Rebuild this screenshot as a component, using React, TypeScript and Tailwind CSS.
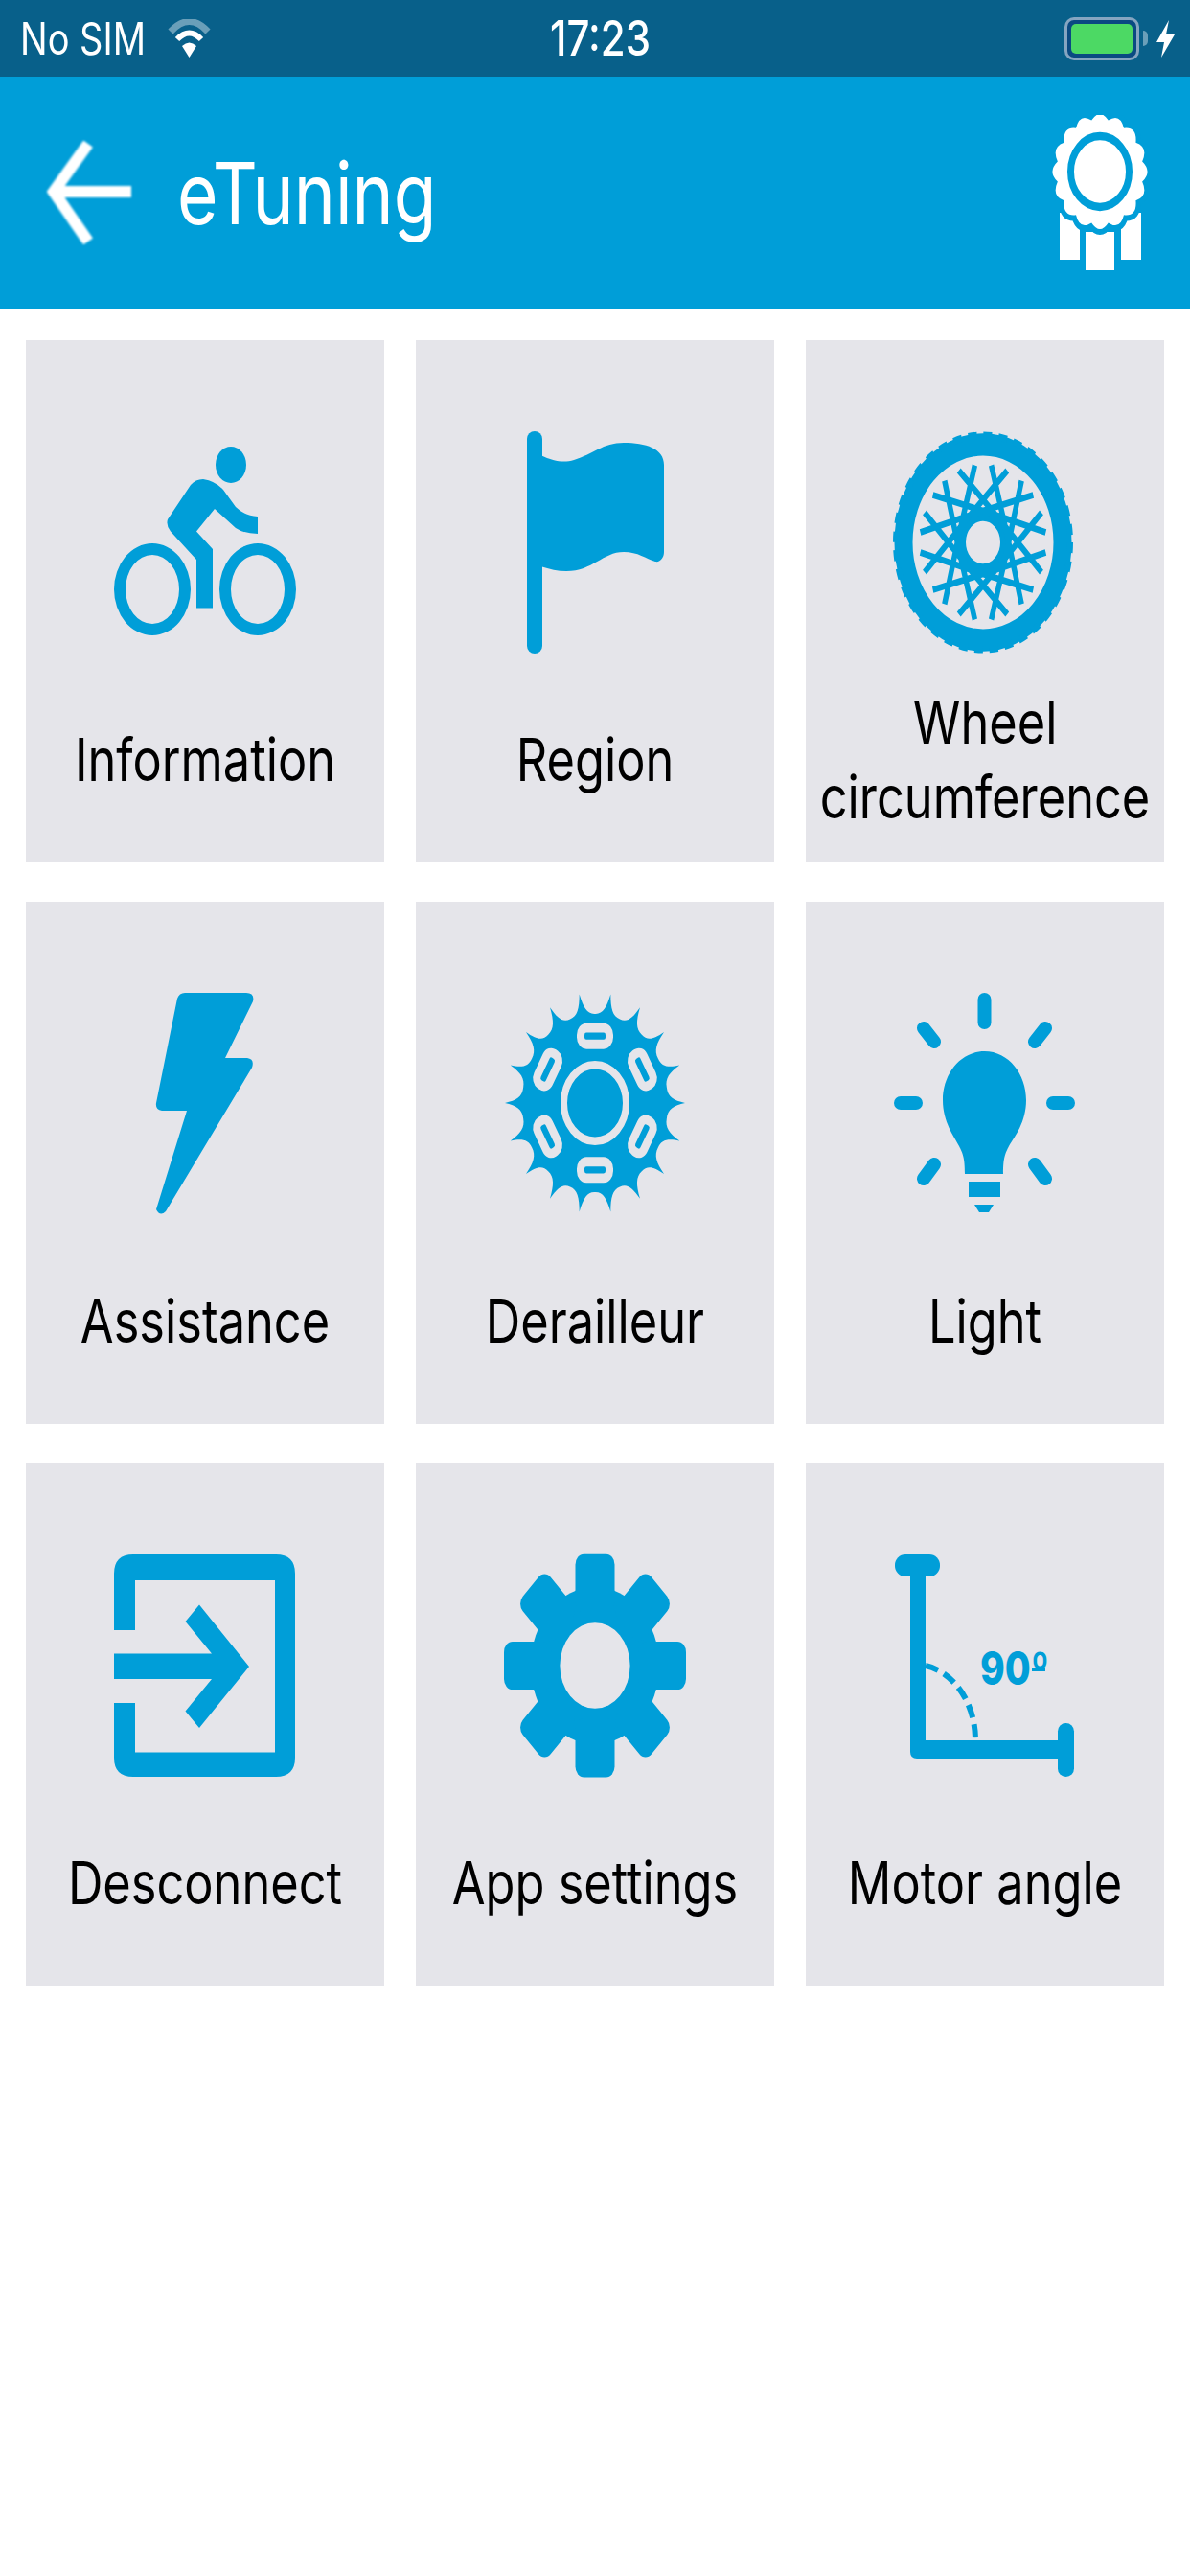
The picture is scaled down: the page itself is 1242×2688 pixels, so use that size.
import type { ReactNode } from 'react';

const BLUE = '#009ed8';
const CARD = '#e5e5ea';

const polar = (r: number, deg: number) => {
  const a = (deg * Math.PI) / 180;
  return `${(r * Math.cos(a)).toFixed(2)} ${(r * Math.sin(a)).toFixed(2)}`;
};

// scalloped edge for the award badge
const lobes = (count: number, rTip: number, rCtrl: number, start = 0) => {
  const step = 360 / count;
  let d = `M${polar(rTip, start)}`;
  for (let i = 0; i < count; i++) {
    const a = start + i * step;
    d += ` Q${polar(rCtrl, a + step / 2)} ${polar(rTip, a + step)}`;
  }
  return d + 'Z';
};

// sprocket edge: thin tips with round valleys between them
const teeth = (count: number, rTip: number, rValley: number) => {
  const step = 360 / count;
  let d = `M${polar(rTip, 0)}`;
  for (let i = 0; i < count; i++) {
    const a = i * step;
    d += ` C${polar(rValley + 6, a + 1.5)} ${polar(rValley, a + 4)} ${polar(rValley, a + step / 2)}`;
    d += ` C${polar(rValley, a + step - 4)} ${polar(rValley + 6, a + step - 1.5)} ${polar(rTip, a + step)}`;
  }
  return d + 'Z';
};

// every icon is drawn on a card-wide canvas, 232px tall; the source art is stretched vertically
function IconCanvas({ children }: { children: ReactNode }) {
  return (
    <svg viewBox="0 0 374 232" className="block w-[374px] h-[232px] overflow-visible" fill={BLUE}>
      {children}
    </svg>
  );
}

function BikeIcon() {
  return (
    <IconCanvas>
      <ellipse cx="214" cy="35" rx="16" ry="19" />
      <path
        fillRule="evenodd"
        d="M92 165a40 48 0 1 0 80 0a40 48 0 1 0 -80 0ZM104 165a28 36 0 1 1 56 0a28 36 0 1 1 -56 0ZM202 165a40 48 0 1 0 80 0a40 48 0 1 0 -80 0ZM214 165a28 36 0 1 1 56 0a28 36 0 1 1 -56 0Z"
      />
      <path d="M185 50Q198 52 206 61L219 79Q228 88 242 89V107Q228 107 219 101L197 81L178 104.5L195 123V184.5H178V134L151 104.5Q146 98 148 92L172 56Q177 50 185 50Z" />
    </IconCanvas>
  );
}

function FlagIcon() {
  return (
    <IconCanvas>
      <rect x="116" y="0" width="16" height="232" rx="8" />
      <path d="M130 25C145 32 155 33 165 30C185 24 195 12 217 12C240 12 259 18 259 35V126C259 132 255 137 250 136C240 133 232 126 217 126C195 126 185 146 157 146C148 146 140 144 130 141Z" />
    </IconCanvas>
  );
}

function WheelIcon() {
  const spokes = Array.from({ length: 24 }, (_, i) => {
    const end = 7.5 + i * 15;
    const hub = end + (i % 2 === 0 ? 72 : -72);
    return `M${polar(66, end)}L${polar(26, hub)}`;
  });
  return (
    <IconCanvas>
      <g transform="translate(185 116) scale(1 1.23)">
        <circle r="83" fill="none" stroke={BLUE} strokeWidth="19" />
        <circle r="91" fill="none" stroke={BLUE} strokeWidth="6" strokeDasharray="9 6.88" />
        <circle r="22" fill="none" stroke={BLUE} strokeWidth="8" />
        <path d={spokes.join('')} fill="none" stroke={BLUE} strokeWidth="5.5" />
      </g>
    </IconCanvas>
  );
}

function BoltIcon() {
  return (
    <IconCanvas>
      <path d="M166 0H230Q239 0 237 9L208 68H231Q239 69 236 78L146 228Q140 234 136 226L168 123H142Q135 122 136 115L158 6Q160 0 166 0Z" />
    </IconCanvas>
  );
}

function SprocketIcon() {
  const slots = [90, 30, -30, -90, -150, 150];
  return (
    <IconCanvas>
      <g transform="translate(187 115) scale(1 1.225)">
        <path d={teeth(18, 94, 76)} />
        <circle r="32.5" fill="none" stroke={CARD} strokeWidth="7" />
        {slots.map((deg) => (
          <g key={deg} transform={`rotate(${deg}) translate(57 0) rotate(90)`}>
            <rect x="-15" y="-7" width="30" height="14" rx="6" stroke={CARD} strokeWidth="8" />
          </g>
        ))}
      </g>
    </IconCanvas>
  );
}

function BulbIcon() {
  return (
    <IconCanvas>
      <g stroke={BLUE} strokeWidth="14" strokeLinecap="round">
        <path d="M186.5 7V31M99 115H115M258 115H274M123 37L134 51M250 37L239 51M134 179L123 194M239 179L250 194" />
      </g>
      <path d="M186.5 61C212 61 230 85 230 112C230 135 218 150 212 160C208 168 206 172 206 189H166C166 172 164 168 160 160C155 150 143 135 143 112C143 85 161 61 186.5 61Z" />
      <rect x="170" y="197" width="33" height="16" />
      <path d="M176 221H196L191 229H181Z" />
    </IconCanvas>
  );
}

function DisconnectIcon() {
  return (
    <IconCanvas>
      <path d="M92 79V20Q92 0 112 0H261Q281 0 281 20V212Q281 232 261 232H112Q92 232 92 212V155H114V206.5H260V27H114V79Z" />
      <path d="M92 103.5H194L166.5 70L181 52.6L233 117L181 181L166.5 163.5L194 130H92Z" />
    </IconCanvas>
  );
}

function GearIcon() {
  return (
    <IconCanvas>
      <g transform="translate(187 116) scale(1 1.225)">
        <circle r="67" />
        {[0, 45, 90, 135, 180, 225, 270, 315].map((deg) => (
          <rect key={deg} x="-20.5" y="-95" width="41" height="50" rx="9" transform={`rotate(${deg})`} />
        ))}
        <circle r="36.6" fill={CARD} />
      </g>
    </IconCanvas>
  );
}

function AngleIcon() {
  return (
    <IconCanvas>
      <rect x="93" y="0" width="47" height="23" rx="11" />
      <path d="M109 10H125V194H270V213H116Q109 213 109 206Z" />
      <rect x="263" y="176" width="17" height="56" rx="8.5" />
      <path d="M125 116C152 122 177 152 177 194" fill="none" stroke={BLUE} strokeWidth="6" strokeDasharray="14 7" />
      <text
        transform="translate(182 136) scale(1 1.22)"
        fontSize="39"
        fontWeight="800"
        fontFamily="Inter, sans-serif"
      >
        90º
      </text>
      <rect x="236" y="119" width="14" height="3" />
    </IconCanvas>
  );
}

function AwardIcon() {
  const edge = lobes(16, 45, 55, 11.25);
  return (
    <svg viewBox="0 0 100 162" className="w-[100px] h-[162px]" fill="#fff">
      <rect x="8" y="102" width="21" height="49" />
      <rect x="72" y="102" width="21" height="49" />
      <rect x="35" y="122" width="30" height="40" />
      <g transform="translate(50 59) scale(1 1.21)">
        <path d={edge} stroke={BLUE} strokeWidth="10" paintOrder="stroke" />
        <circle r="30.5" fill="none" stroke={BLUE} strokeWidth="7" />
      </g>
    </svg>
  );
}

const items = [
  { label: 'Information', icon: <BikeIcon /> },
  { label: 'Region', icon: <FlagIcon /> },
  { label: 'Wheel circumference', icon: <WheelIcon /> },
  { label: 'Assistance', icon: <BoltIcon /> },
  { label: 'Derailleur', icon: <SprocketIcon /> },
  { label: 'Light', icon: <BulbIcon /> },
  { label: 'Desconnect', icon: <DisconnectIcon /> },
  { label: 'App settings', icon: <GearIcon /> },
  { label: 'Motor angle', icon: <AngleIcon /> },
];

export default function App() {
  return (
    <div className="min-h-screen bg-white font-['Inter','Liberation_Sans',sans-serif]">
      <div className="h-[80px] bg-[#08608a] text-white grid grid-cols-3 items-center pl-[21px] pr-[16px]">
        <div className="flex items-center gap-[22px]">
          <span className="text-[38px] leading-none scale-y-[1.22]">No SIM</span>
          <svg viewBox="0 0 47 41" className="w-[47px] h-[41px]" fill="none" stroke="#fff">
            <path d="M4 13Q23.5 -8 43 13" strokeWidth="7" opacity="0.4" />
            <path d="M11 21Q23.5 8 36 21" strokeWidth="6" />
            <path d="M16 28Q23.5 21 31 28L23.5 40Z" fill="#fff" stroke="none" />
          </svg>
        </div>
        <div className="text-center text-[42px] font-medium leading-none scale-y-[1.22] pl-[6px]">17:23</div>
        <div className="flex items-center justify-end gap-[9px]">
          <div className="w-[78px] h-[45px] rounded-[10px] border-[3px] border-white/50 p-[4px] bg-[#0a4a82]">
            <div className="w-full h-full rounded-[5px] bg-[#4cd964]" />
          </div>
          <div className="w-[5px] h-[16px] -ml-[5px] rounded-r-full bg-white/40" />
          <svg viewBox="0 0 19 39" className="w-[19px] h-[39px]" fill="#fff">
            <path d="M13 0L0 23H8L5 39L19 15H10Z" />
          </svg>
        </div>
      </div>

      <div className="h-[242px] bg-[#009ed8] text-white flex items-center pl-[49px] pr-[44px]">
        <svg viewBox="0 0 88 108" className="w-[88px] h-[108px] blur-[1px]" fill="none" stroke="#fff" strokeWidth="12">
          <path d="M88 53H7M43 3L7 53L43 105" />
        </svg>
        <h1 className="ml-[48px] text-[73px] leading-none font-normal scale-y-[1.22]">eTuning</h1>
        <div className="ml-auto">
          <AwardIcon />
        </div>
      </div>

      <div className="grid grid-cols-3 gap-x-[33px] gap-y-[41px] px-[27px] pt-[33px]">
        {items.map((item) => (
          <div key={item.label} className="h-[545px] bg-[#e5e5ea] flex flex-col items-center pt-[95px]">
            {item.icon}
            <div className="flex-1 flex items-center justify-center text-center px-[10px] pt-[3px]">
              <span className="block text-[50.5px] leading-[64px] text-black scale-y-[1.22]">{item.label}</span>
            </div>
          </div>
        ))}
      </div>
    </div>
  );
}
